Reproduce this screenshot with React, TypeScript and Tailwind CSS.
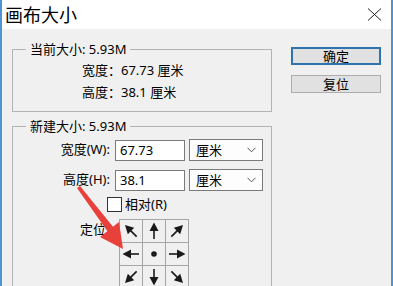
import React from 'react';

const font = { fontFamily: '"Noto Sans", "Noto Sans CJK SC", sans-serif' };

// one cell of the anchor grid: arrow pointing at the given angle (0 = right)
const ArrowCell: React.FC<{ angle?: number; dot?: boolean }> = ({ angle = 0, dot }) => (
  <div className="flex h-[22px] w-[22px] items-center justify-center bg-[#f0f0f0]">
    <svg width="22" height="22" viewBox="0 0 22 22">
      {dot ? (
        <circle cx="11" cy="11" r="2.8" fill="#1a1a1a" />
      ) : (
        <g transform={`rotate(${angle} 11 11)`}>
          <line x1="3" y1="11" x2="13" y2="11" stroke="#1a1a1a" strokeWidth="1.6" />
          <polygon points="19.5,11 11,6.5 11,15.5" fill="#1a1a1a" />
        </g>
      )}
    </svg>
  </div>
);

const Select: React.FC<{ value: string }> = ({ value }) => (
  <div className="ml-[4px] flex h-[22px] w-[74px] items-center justify-between border border-[#7a7a7a] bg-[#fdfdfd] pl-[6px] pr-[6px] text-[13px] leading-none text-black">
    <span>{value}</span>
    <svg width="9" height="6" viewBox="0 0 9 6">
      <polyline points="0.5,0.8 4.5,4.8 8.5,0.8" fill="none" stroke="#555" strokeWidth="1" />
    </svg>
  </div>
);

export default function App() {
  return (
    <div
      className="relative flex h-[286px] w-[393px] flex-col overflow-hidden border-x-2 border-[#4f93d1] bg-[#f0f0f0] text-black"
      style={font}
    >
      {/* title bar */}
      <div className="flex h-[29px] shrink-0 items-center justify-between bg-white pl-[3px] pr-[9px]">
        <span className="text-[18px] leading-none">画布大小</span>
        <svg width="15" height="13" viewBox="0 0 15 13">
          <line x1="1" y1="0.5" x2="14" y2="12.5" stroke="#222" strokeWidth="1" />
          <line x1="14" y1="0.5" x2="1" y2="12.5" stroke="#222" strokeWidth="1" />
        </svg>
      </div>

      <div className="flex pl-[10px]">
        {/* left column */}
        <div className="flex w-[260px] flex-col">
          <fieldset className="mt-[12px] h-[71px] border border-[#b4b4b4] text-[13px]">
            <legend className="ml-[13px] px-[4px] leading-[16px]">当前大小: 5.93M</legend>
            <div className="ml-[69px] mt-[3px] flex h-[22px] items-center">宽度：67.73 厘米</div>
            <div className="ml-[69px] flex h-[22px] items-center">高度：38.1 厘米</div>
          </fieldset>

          <fieldset className="mt-[6px] h-[200px] border border-[#b4b4b4] text-[13px]">
            <legend className="ml-[13px] px-[4px] leading-[16px]">新建大小: 5.93M</legend>
            <div className="mt-[5px] flex items-center">
              <span className="w-[97px] text-right">宽度(W):</span>
              <div className="ml-[5px] flex h-[21px] w-[70px] items-center border border-[#7a7a7a] bg-white px-[4px] leading-none">67.73</div>
              <Select value="厘米" />
            </div>
            <div className="mt-[8px] flex items-center">
              <span className="w-[97px] text-right">高度(H):</span>
              <div className="ml-[5px] flex h-[21px] w-[70px] items-center border border-[#7a7a7a] bg-white px-[4px] leading-none">38.1</div>
              <Select value="厘米" />
            </div>
            <div className="mt-[6px] flex items-center">
              <div className="ml-[94px] h-[15px] w-[15px] border border-[#333] bg-white" />
              <span className="ml-[3px] leading-none">相对(R)</span>
            </div>
            <div className="mt-[7px] flex items-start">
              <span className="mt-[2px] w-[93px] text-right leading-[16px]">定位</span>
              <div className="ml-[13px] grid grid-cols-[repeat(3,22px)] gap-px bg-[#a5a5a5] p-px">
                <ArrowCell angle={-135} />
                <ArrowCell angle={-90} />
                <ArrowCell angle={-45} />
                <ArrowCell angle={180} />
                <ArrowCell dot />
                <ArrowCell angle={0} />
                <ArrowCell angle={135} />
                <ArrowCell angle={90} />
                <ArrowCell angle={45} />
              </div>
            </div>
          </fieldset>
        </div>

        {/* buttons */}
        <div className="ml-[19px] mt-[18px] flex w-[90px] flex-col gap-[10px] text-[13px]">
          <div className="flex h-[18px] items-center justify-center border-2 border-[#2f73ad] bg-[#e1e1e1] leading-none">确定</div>
          <div className="flex h-[18px] items-center justify-center border border-[#adadad] bg-[#e1e1e1] leading-none">复位</div>
        </div>
      </div>

      {/* red annotation arrow */}
      <svg className="pointer-events-none absolute left-[-2px] top-0" width="393" height="286" viewBox="0 0 393 286">
        <polygon points="77,188 80,186 114,228 108,232" fill="#e8413b" />
        <polygon points="123,249 100,237 119,222" fill="#e8413b" />
      </svg>
    </div>
  );
}
